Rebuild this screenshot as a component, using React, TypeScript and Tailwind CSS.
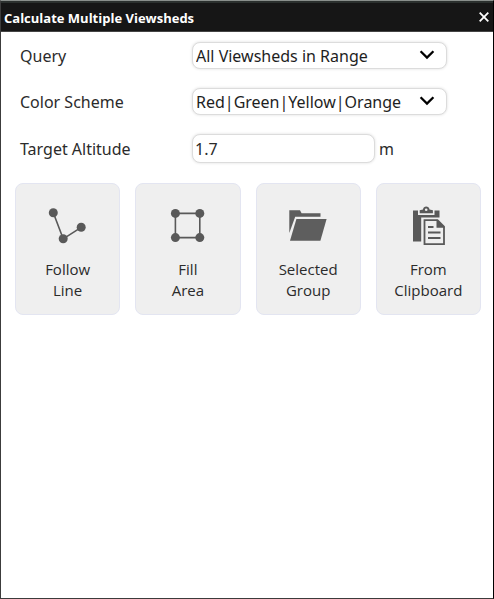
import { useState } from "react";
import type { ReactNode } from "react";

type SelectRowProps = {
  id: string;
  label: string;
  value: string;
  options: string[];
  onChange: (val: string) => void;
};

type ActionButtonProps = {
  icon: ReactNode;
  lines: [string, string];
};

const queryOptions = ["All Viewsheds in Range", "Nearest Viewshed"];
const colorOptions = ["Red|Green|Yellow|Orange", "Red|Green"];

function SelectRow({ id, label, value, options, onChange }: SelectRowProps) {
  return (
    <div className="flex items-center">
      <label htmlFor={id} className="w-[172px] shrink-0">
        {label}
      </label>
      <div className="relative min-w-0 max-w-[255px] flex-1">
        <select
          id={id}
          value={value}
          onChange={(e) => onChange(e.target.value)}
          className="block h-[27px] w-full appearance-none rounded-lg border border-[#dcdcdc] bg-white pr-10 pl-[3px] text-[#1e1e1e] shadow-[0_0_3px_#dcdcdc]"
        >
          {options.map((option) => (
            <option key={option}>{option}</option>
          ))}
        </select>
        <svg
          viewBox="0 0 16 10"
          className="pointer-events-none absolute top-2 right-3 h-[10px] w-4"
          fill="none"
          stroke="#000"
          strokeWidth="2.3"
        >
          <path d="M1.6 1.2 8 7.6 14.4 1.2" />
        </svg>
      </div>
    </div>
  );
}

function ActionButton({ icon, lines }: ActionButtonProps) {
  return (
    <button
      type="button"
      className="flex h-[132px] flex-col items-center rounded-lg border border-[#e3e5f1] bg-[#efefef] pt-[22px] font-['Open_Sans','Noto_Sans',sans-serif] text-[15px] leading-[21px] text-[#2b2b2b]"
    >
      {icon}
      <span className="mt-[13px]">
        {lines[0]}
        <br />
        {lines[1]}
      </span>
    </button>
  );
}

function LineIcon() {
  return (
    <svg viewBox="0 0 40 40" className="size-10" fill="#595959" stroke="#595959">
      <path d="M5.3 6.7 15.2 32.8 33.2 21.3" fill="none" strokeWidth="1.6" />
      <g stroke="none">
        <circle cx="5.3" cy="6.7" r="4.5" />
        <circle cx="15.2" cy="32.8" r="4.5" />
        <circle cx="33.2" cy="21.3" r="4.5" />
      </g>
    </svg>
  );
}

function AreaIcon() {
  return (
    <svg viewBox="0 0 40 40" className="size-10" fill="#595959" stroke="#595959">
      <path d="M7.4 7.4H31.8V31.6H7.4Z" fill="none" strokeWidth="1.6" />
      <g stroke="none">
        <circle cx="7.4" cy="7.4" r="4.5" />
        <circle cx="31.8" cy="7.4" r="4.5" />
        <circle cx="7.4" cy="31.6" r="4.5" />
        <circle cx="31.8" cy="31.6" r="4.5" />
      </g>
    </svg>
  );
}

function FolderIcon() {
  return (
    <svg viewBox="0 0 40 40" className="size-10" fill="#5e5e5e">
      <path d="M1.3 27V4.2H12L13.6 7.2H32.5V10.8H7.2Z" />
      <path d="M8.4 13H38.6L32.4 34.8H2Z" />
    </svg>
  );
}

function ClipboardIcon() {
  return (
    <svg viewBox="-1 0 40 40" className="size-10" fill="#595959">
      <path d="M4 4.5H9V9H25.5V4.5H30.5V11.5H12.2V35.5H4Z" />
      <path
        fillRule="evenodd"
        d="M10.7 7.3V4.3L14 3.4C14.3 1.6 15.6 0.6 17.2 0.6S20.2 1.6 20.5 3.4L23.9 4.3V7.3ZM17.2 2.4A1.3 1.3 0 1 0 17.2 5 1.3 1.3 0 1 0 17.2 2.4Z"
      />
      <path d="M15.5 14.2H28.5L35 20.7V38.2H15.5Z" fill="#efefef" stroke="#595959" strokeWidth="1.8" />
      <path d="M27.5 13.4 35.9 21.8H27.5Z" />
      <path d="M19 21H24.5M19 26.5H31.5M19 32H31.5" stroke="#595959" strokeWidth="1.8" />
    </svg>
  );
}

export default function App() {
  const [query, setQuery] = useState(queryOptions[0]);
  const [colorScheme, setColorScheme] = useState(colorOptions[0]);
  const [altitude, setAltitude] = useState("1.7");

  return (
    <div className="flex min-h-screen flex-col border border-t-[#8a8f8c] border-r-black border-b-[#3c3c3c] border-l-[#3c3c3c] bg-white font-['Noto_Sans','Open_Sans',sans-serif] text-base text-[#2b2b2b]">
      <header className="flex h-[31px] items-center justify-between border-t-2 border-b border-t-[#2b302e] border-b-[#444] bg-[#161616] pr-[3px] pl-[3px] text-white">
        <h1 className="pt-1 font-['Open_Sans','Noto_Sans',sans-serif] text-[13px] font-bold">
          Calculate Multiple Viewsheds
        </h1>
        <button type="button" aria-label="Close" className="p-px">
          <svg viewBox="0 0 10 10" className="size-[10px]" stroke="#fff" strokeWidth="1.8">
            <path d="M0.7 0.7 9.3 9.3M9.3 0.7 0.7 9.3" />
          </svg>
        </button>
      </header>
      <main className="pt-[10px] pr-3 pl-[14px]">
        <form className="flex flex-col gap-[19px] pl-[5px]" onSubmit={(e) => e.preventDefault()}>
          <SelectRow id="query" label="Query" value={query} options={queryOptions} onChange={setQuery} />
          <SelectRow
            id="color-scheme"
            label="Color Scheme"
            value={colorScheme}
            options={colorOptions}
            onChange={setColorScheme}
          />
          <div className="flex items-center">
            <label htmlFor="altitude" className="w-[172px] shrink-0">
              Target Altitude
            </label>
            <input
              id="altitude"
              type="text"
              value={altitude}
              onChange={(e) => setAltitude(e.target.value)}
              className="h-[29px] min-w-0 max-w-[183px] flex-1 rounded-lg border border-[#dcdcdc] bg-white px-[2px] text-[#2b2b2b] shadow-[0_0_3px_#dcdcdc]"
            />
            <span className="ml-1">m</span>
          </div>
        </form>
        <div className="mt-5 grid grid-cols-4 gap-[15px]">
          <ActionButton icon={<LineIcon />} lines={["Follow", "Line"]} />
          <ActionButton icon={<AreaIcon />} lines={["Fill", "Area"]} />
          <ActionButton icon={<FolderIcon />} lines={["Selected", "Group"]} />
          <ActionButton icon={<ClipboardIcon />} lines={["From", "Clipboard"]} />
        </div>
      </main>
    </div>
  );
}
